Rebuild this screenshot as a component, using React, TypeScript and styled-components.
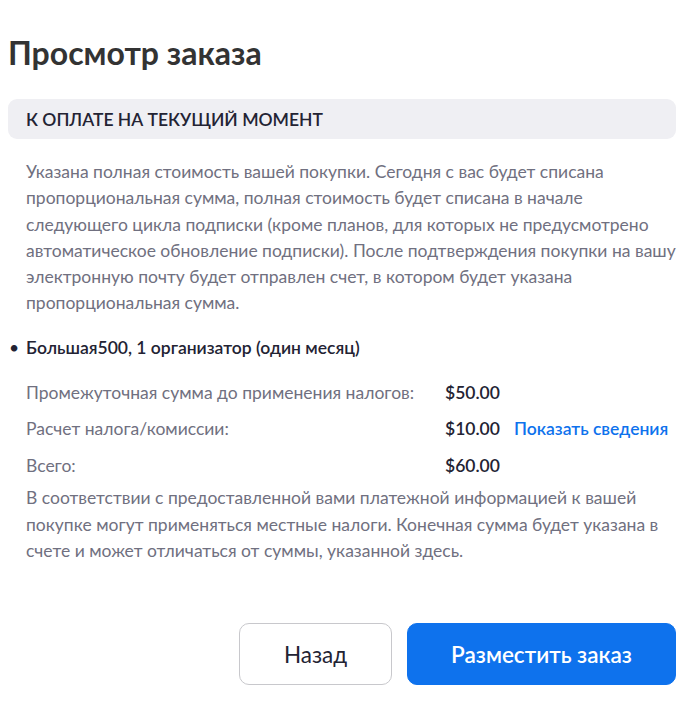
import * as React from 'react'
import styled, { createGlobalStyle } from 'styled-components'

const GlobalStyle = createGlobalStyle`
  body {
    margin: 0;
    background: #ffffff;
    font-family: 'Lato', 'Noto Sans', sans-serif;
    color: #232333;
  }
`

const Page = styled.div`
  width: 668px;
  padding: 25px 0 20px 8px;
  display: flex;
  flex-direction: column;
`

const Title = styled.h1`
  margin: 0 0 18px 0;
  font-size: 32px;
  line-height: 56px;
  font-weight: 700;
  color: #333333;
`

const SectionBar = styled.div`
  display: flex;
  align-items: center;
  height: 40px;
  padding: 0 18px;
  border-radius: 9px;
  background: #efeff3;
  font-size: 17.5px;
  font-weight: 600;
  color: #232333;
`

const Body = styled.div`
  padding: 0 0 0 18px;
`

const Note = styled.p<{ $top: number }>`
  margin: ${(p) => p.$top}px 0 0 0;
  font-size: 17.5px;
  line-height: 26.3px;
  color: #707080;
  max-width: 650px;
`

const Plan = styled.div`
  position: relative;
  margin-top: 18px;
  font-size: 17.5px;
  line-height: 26px;
  font-weight: 600;
  color: #232333;

  &::before {
    content: '•';
    position: absolute;
    left: -17px;
    font-weight: 400;
  }
`

const Rows = styled.div`
  display: grid;
  grid-template-columns: 419px 69px auto;
  grid-auto-rows: 36.5px;
  align-items: center;
  margin-top: 13px;
`

const Label = styled.span`
  font-size: 17.5px;
  color: #707080;
`

const Amount = styled.span`
  font-size: 17.5px;
  font-weight: 600;
  color: #232333;
`

const DetailsLink = styled.a`
  font-size: 17.5px;
  font-weight: 600;
  color: #0e72ed;
  text-decoration: none;
  white-space: nowrap;
  cursor: pointer;
`

const Actions = styled.div`
  display: flex;
  justify-content: flex-end;
  gap: 15px;
  margin-top: 59px;
`

const Button = styled.button<{ $primary?: boolean }>`
  height: 62px;
  width: ${(p) => (p.$primary ? 269 : 153)}px;
  border-radius: 10px;
  border: 1px solid ${(p) => (p.$primary ? '#0e72ed' : '#c8c8cc')};
  background: ${(p) => (p.$primary ? '#0e72ed' : '#ffffff')};
  color: ${(p) => (p.$primary ? '#ffffff' : '#232333')};
  font-family: 'Lato', 'Noto Sans', sans-serif;
  font-size: 22.5px;
  font-weight: ${(p) => (p.$primary ? 600 : 400)};
  cursor: pointer;
`

const App = () => {
  return (
    <>
      <GlobalStyle />
      <Page>
        <Title>Просмотр заказа</Title>
        <SectionBar>К ОПЛАТЕ НА ТЕКУЩИЙ МОМЕНТ</SectionBar>
        <Body>
          <Note $top={20}>
            Указана полная стоимость вашей покупки. Сегодня с вас будет списана
            пропорциональная сумма, полная стоимость будет списана в начале
            следующего цикла подписки (кроме планов, для которых не предусмотрено
            автоматическое обновление подписки). После подтверждения покупки на вашу
            электронную почту будет отправлен счет, в котором будет указана
            пропорциональная сумма.
          </Note>
          <Plan>Большая500, 1 организатор (один месяц)</Plan>
          <Rows>
            <Label>Промежуточная сумма до применения налогов:</Label>
            <Amount>$50.00</Amount>
            <span />
            <Label>Расчет налога/комиссии:</Label>
            <Amount>$10.00</Amount>
            <DetailsLink>Показать сведения</DetailsLink>
            <Label>Всего:</Label>
            <Amount>$60.00</Amount>
            <span />
          </Rows>
          <Note $top={2}>
            В соответствии с предоставленной вами платежной информацией к вашей
            покупке могут применяться местные налоги. Конечная сумма будет указана в
            счете и может отличаться от суммы, указанной здесь.
          </Note>
        </Body>
        <Actions>
          <Button>Назад</Button>
          <Button $primary>Разместить заказ</Button>
        </Actions>
      </Page>
    </>
  )
}

export default App
